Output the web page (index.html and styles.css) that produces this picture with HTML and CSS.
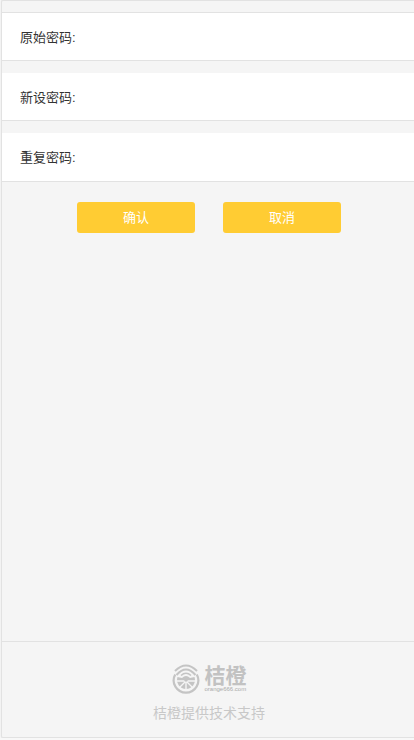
FILE: index.html
```html
<!DOCTYPE html>
<html lang="zh-CN">
<head>
<meta charset="utf-8">
<meta name="viewport" content="width=device-width, initial-scale=1">
<title>修改密码</title>
<link rel="stylesheet" href="styles.css">
</head>
<body>
<div class="page">
  <form class="form">
    <div class="field field-first">
      <label for="old">原始密码:</label>
      <input id="old" type="password">
    </div>
    <div class="field">
      <label for="new">新设密码:</label>
      <input id="new" type="password">
    </div>
    <div class="field field-last">
      <label for="repeat">重复密码:</label>
      <input id="repeat" type="password">
    </div>
    <div class="actions">
      <button class="btn" type="submit">确认</button>
      <button class="btn" type="button">取消</button>
    </div>
  </form>
  <footer class="footer">
    <div class="brand">
      <svg class="brand-mark" viewBox="0 0 28 30" aria-hidden="true">
        <g fill="none" stroke="#c4c4c4">
          <path d="M3.200 10.500A12.300 12.300 0 1 0 24.800 10.500" stroke-width="2.200"/>
          <path d="M3 7Q14-4 25 7" stroke-width="2"/>
          <path d="M4.500 11Q14 0 23.500 11" stroke-width="2"/>
          <path d="M9 11.500Q14 7 19 11.500" stroke-width="1.600"/>
        </g>
        <path d="M5.500 13A9 9 0 1 0 22.500 13L18 14Q14 10 10 14Z" fill="#c4c4c4"/>
        <path d="M14 17V26.500M5 17H23M14 17L7 24M14 17L21 24" fill="none" stroke="#f5f5f5" stroke-width="1.400"/>
        <circle cx="14" cy="16" r="1.800" fill="#c4c4c4"/>
      </svg>
      <div class="brand-text">
        <span class="brand-name">桔橙</span>
        <span class="brand-site">orange666.com</span>
      </div>
    </div>
    <p class="support">桔橙提供技术支持</p>
  </footer>
</div>
</body>
</html>
```
FILE: styles.css
```css
* {
  box-sizing: border-box;
}

body {
  margin: 0;
  background: #f8f8f8;
  color: #333;
  font-family: "Liberation Sans", "Noto Sans CJK SC", sans-serif;
  font-size: 13px;
}

.page {
  display: flex;
  flex-direction: column;
  min-height: calc(100vh - 2px);
  margin-left: 1px;
  border: 1px solid #e2e2e2;
  border-right: 0;
  border-radius: 2px 0 0 2px;
  background: #f5f5f5;
  box-shadow: 0 0 2px #e4e4e4;
}

.form {
  flex: 1;
  padding-top: 11px;
}

.field {
  display: flex;
  align-items: center;
  height: 48px;
  margin-bottom: 12px;
  padding: 0 18px;
  border-bottom: 1px solid #e2e2e2;
  background: #fff;
}

.field-first {
  height: 49px;
  border-top: 1px solid #e2e2e2;
}

.field-last {
  height: 49px;
  margin-bottom: 0;
  padding-bottom: 1px;
}

.field input {
  flex: 1;
  min-width: 0;
  height: 30px;
  border: 0;
  outline: 0;
  background: transparent;
  font: inherit;
}

.actions {
  display: flex;
  justify-content: center;
  gap: 28px;
  padding: 20px 16px 0 18px;
}

.btn {
  width: 118px;
  height: 31px;
  padding: 0 0 2px;
  border: 0;
  border-radius: 3px;
  background: #fc3;
  color: #fff;
  font: inherit;
}

.footer {
  padding: 20px 0 13px 2px;
  border-top: 1px solid #e2e2e2;
  color: #c8c8c8;
  text-align: center;
}

.brand {
  display: flex;
  justify-content: center;
  align-items: center;
  gap: 5px;
  height: 34px;
}

.brand-mark {
  width: 28px;
  height: 30px;
}

.brand-text {
  display: flex;
  flex-direction: column;
  align-items: flex-start;
  color: #c2c2c2;
}

.brand-name {
  font-size: 21px;
  font-weight: 700;
  line-height: 21px;
}

.brand-site {
  color: #aaa;
  font-size: 6px;
  line-height: 7px;
}

.support {
  margin: 6px 0 0;
  font-size: 14px;
  line-height: 22px;
}
```
